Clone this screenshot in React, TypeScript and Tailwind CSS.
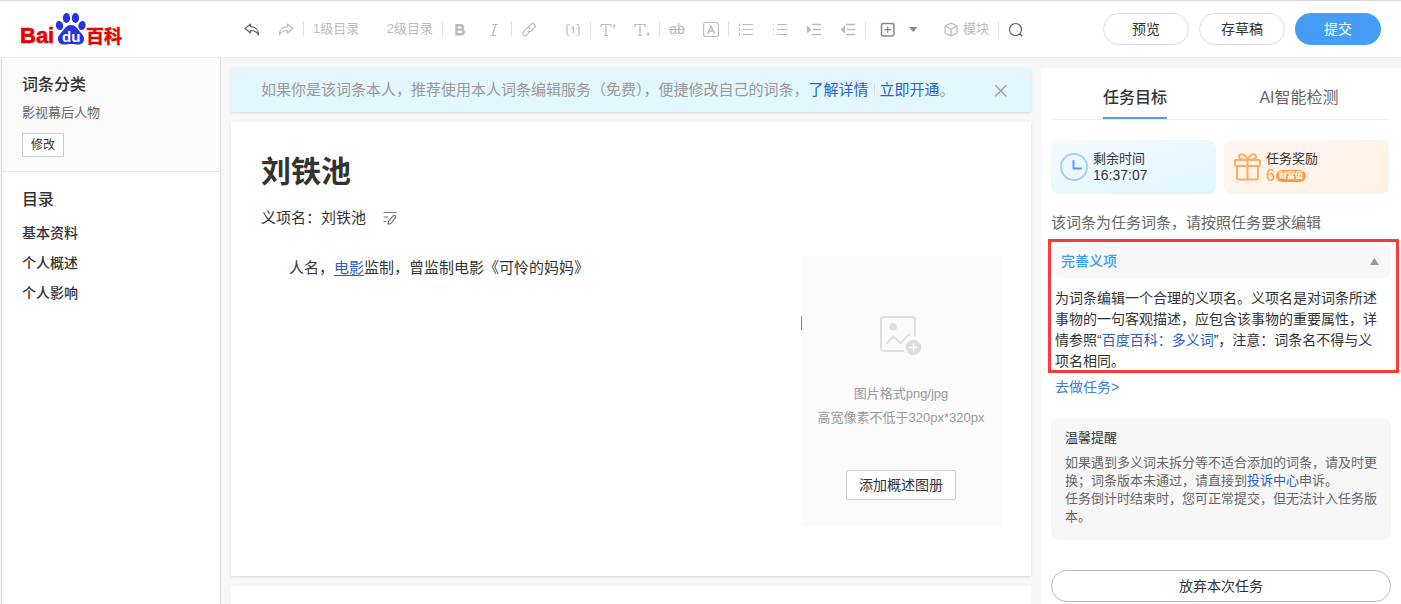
import React from 'react';

const catalog = ['基本资料', '个人概述', '个人影响'];

function Icon({ children, size = 16, className = '' }: { children: React.ReactNode; size?: number; className?: string }) {
  return (
    <svg
      width={size}
      height={size}
      viewBox="0 0 16 16"
      fill="none"
      stroke="currentColor"
      strokeWidth="1.2"
      strokeLinecap="round"
      strokeLinejoin="round"
      className={className}
      aria-hidden="true"
    >
      {children}
    </svg>
  );
}

function Sep() {
  return <span className="h-4 w-px shrink-0 bg-[#e0e0e0]" />;
}

function Tool({ label, active, children }: { label: string; active?: boolean; children: React.ReactNode }) {
  return (
    <button
      aria-label={label}
      className={`flex h-8 w-[34px] shrink-0 items-center justify-center ${active ? 'text-[#666]' : 'text-[#bbb]'}`}
    >
      {children}
    </button>
  );
}

function Logo() {
  return (
    <a href="#" aria-label="百度百科" className="block w-[110px]">
      <svg width="110" height="46" viewBox="0 -6 110 46" aria-hidden="true">
        <g fill="#2932e1">
          <ellipse cx="46.500" cy="6" rx="3.600" ry="5" />
          <ellipse cx="55.500" cy="6" rx="3.600" ry="5" />
          <ellipse cx="39.500" cy="13.500" rx="3.600" ry="4.600" transform="rotate(-15 39.500 13.500)" />
          <ellipse cx="62" cy="13.500" rx="3.600" ry="4.600" transform="rotate(15 62 13.500)" />
          <path d="M51 13c3.500 0 5.500 2 7.500 5s5.500 5 5.500 9-3 5.500-6 5.500c-2.500 0-4.500-.6-7-.6s-4.500.6-7 .6c-3 0-6-1.500-6-5.500s3.500-6 5.500-9 4-5 7.500-5z" />
        </g>
        <text x="0" y="31" fill="#e10602" stroke="#e10602" strokeWidth="0.600" fontSize="22" fontWeight="700" fontFamily="Liberation Sans">
          Bai
        </text>
        <text x="42" y="30" fill="#fff" fontSize="15" fontWeight="700" fontFamily="Liberation Sans">
          du
        </text>
        <text x="66" y="31" fill="#e10602" stroke="#e10602" strokeWidth="0.500" fontSize="18" fontWeight="700" fontFamily="Noto Sans CJK SC">
          百科
        </text>
      </svg>
    </a>
  );
}

function Toolbar() {
  return (
    <div className="flex min-w-0 items-center text-[13px] leading-4 text-[#bbb]">
      <Tool label="撤销" active>
        <Icon>
          <path d="M6.500 3L1 7.500l5.500 4.500V9.500c4 0 6.500 1 8 4.500.3-5-3-8-8-8.300z" />
        </Icon>
      </Tool>
      <Tool label="重做">
        <Icon>
          <path d="M9.500 3L15 7.500l-5.500 4.500V9.500c-4 0-6.500 1-8 4.500-.3-5 3-8 8-8.300z" />
        </Icon>
      </Tool>
      <Sep />
      <div className="flex w-[138px] justify-between px-[9px]">
        <button>1级目录</button>
        <button>2级目录</button>
      </div>
      <Sep />
      <Tool label="粗体">
        <Icon>
          <path strokeWidth="2.400" strokeLinejoin="miter" d="M4.500 4.200h4.200a2.200 2.200 0 010 4.400H4.500zM4.500 8.600h4.900a2.300 2.300 0 010 4.600H4.500z" />
        </Icon>
      </Tool>
      <Tool label="斜体">
        <Icon>
          <path d="M6.500 3.500h5M4.500 14.500h5M9.500 3.500l-3 11" />
        </Icon>
      </Tool>
      <Sep />
      <div className="flex gap-[10px]">
        <Tool label="链接">
          <Icon>
            <path d="M7 6.500l3-3c2.500-2 5.300.8 3.500 3.200l-3 3.200c-1.200 1-2.500.8-3.400 0M9 10l-3 4c-2.500 2-5.300-.8-3.500-3.200l3-3.200c1.200-1 2.500-.8 3.400 0" />
          </Icon>
        </Tool>
        <Tool label="参考资料">
          <Icon>
            <path d="M4 3.500C2 3.500 2 4 2 6v6c0 2 0 2.500 2 2.500M12 3.500c2 0 2 .5 2 2.500v6c0 2 0 2.500-2 2.500M7 7l1.300-1v6" />
          </Icon>
        </Tool>
      </div>
      <Sep />
      <Tool label="上标">
        <Icon>
          <path d="M1 5.500v-2h10v2M6 3.500v11M4.500 14.500h3M13.500 4h1.500l-1.500 2H15" />
        </Icon>
      </Tool>
      <Tool label="下标">
        <Icon>
          <path d="M1 5.500v-2h10v2M6 3.500v11M4.500 14.500h3M13.500 12h1.500l-1.500 2H15" />
        </Icon>
      </Tool>
      <Sep />
      <Tool label="删除线">
        <span className="text-[14px] line-through">ab</span>
      </Tool>
      <Tool label="文字背景">
        <Icon>
          <rect x="0.600" y="1.500" width="14.800" height="14" rx="2" />
          <path strokeWidth="1.500" d="M4.800 12.500L8 5l3.200 7.500M5.800 10h4.400" />
        </Icon>
      </Tool>
      <Sep />
      <Tool label="有序列表">
        <Icon>
          <path d="M5 3.500h9.500M5 8.500h9.500M5 13.500h9.500M1.500 3v1.500M1.500 8v1M1.500 12.500V14" />
        </Icon>
      </Tool>
      <Tool label="无序列表">
        <Icon>
          <path d="M5.500 3.500h9M5.500 8.500h9M5.500 13.500h9M1.500 3.500h.1M1.500 8.500h.1M1.500 13.500h.1" />
        </Icon>
      </Tool>
      <Tool label="增加缩进">
        <Icon>
          <path strokeWidth="1.600" d="M6.500 3.500h8M7.500 8.500h7M6.500 13.500h8" />
          <path fill="currentColor" d="M1.500 5.500v6l3-3z" />
        </Icon>
      </Tool>
      <Tool label="减少缩进">
        <Icon>
          <path strokeWidth="1.600" d="M6.500 3.500h8M7.500 8.500h7M6.500 13.500h8" />
          <path fill="currentColor" d="M4.500 5.500v6l-3-3z" />
        </Icon>
      </Tool>
      <Sep />
      <div className="flex pl-[5px]">
        <Tool label="插入" active>
          <Icon>
            <rect x="1.500" y="2.500" width="12.500" height="12.500" rx="2" stroke="#888" strokeWidth="1.500" />
            <path d="M7.700 6v5.500M5 8.700h5.500" stroke="#5f88b8" />
          </Icon>
        </Tool>
        <button aria-label="更多插入" className="w-4 text-[#888]">
          <Icon>
            <path fill="currentColor" stroke="none" d="M4 6h8.500L8.200 11z" />
          </Icon>
        </button>
      </div>
      <button className="flex shrink-0 items-center gap-1 pr-[9px] pl-[22px] whitespace-nowrap">
        <Icon>
          <path d="M8 2l6 3v7l-6 3-6-3V5zM2 5l6 3.200L14 5M8 8.200V15" />
        </Icon>
        模块
      </button>
      <Sep />
      <Tool label="搜索" active>
        <Icon>
          <circle cx="7.500" cy="8.500" r="6" />
          <path d="M12 13l2 2" />
        </Icon>
      </Tool>
    </div>
  );
}

function Sidebar() {
  return (
    <aside className="ml-px w-[220px] shrink-0 border-x border-[#ddd] bg-white text-[#333]">
      <section className="border-b border-[#e8e8e8] bg-[#fafafa] px-5 pt-[15px] pb-[14px]">
        <h2 className="text-[16px] leading-6 font-medium">词条分类</h2>
        <p className="mt-1 text-[13px] leading-6 text-[#666]">影视幕后人物</p>
        <button className="mt-2 h-6 w-[42px] border border-[#ccc] bg-white text-[12px] leading-4">修改</button>
      </section>
      <nav className="px-5 pt-4">
        <h2 className="text-[16px] leading-6 font-medium">目录</h2>
        <ul className="mt-[6px] text-[14px] leading-[30px] font-medium">
          {catalog.map((item) => (
            <li key={item}>
              <a href="#">{item}</a>
            </li>
          ))}
        </ul>
      </nav>
    </aside>
  );
}

function Banner() {
  return (
    <div className="flex h-11 shrink-0 items-center justify-between bg-[#e3f6fe] pr-[22px] pl-[30px] text-[15px] leading-6 text-[#999] shadow-sm">
      <p className="whitespace-nowrap">
        如果你是该词条本人，推荐使用本人词条编辑服务（免费），便捷修改自己的词条，
        <a href="#" className="text-[#2b60cc]">了解详情</a>
        <span className="mx-[5px] inline-block h-3 w-px bg-[#ddd]" />
        <a href="#" className="text-[#2b60cc]">立即开通</a>。
      </p>
      <button aria-label="关闭" className="text-[#999]">
        <Icon>
          <path d="M2.500 3.500l10.500 10.500M13 3.500L2.500 14" />
        </Icon>
      </button>
    </div>
  );
}

function Article() {
  return (
    <article className="h-[454px] shrink-0 bg-white px-[30px] pt-[30px] text-[#333] shadow-sm">
      <h1 className="text-[30px] leading-10 font-bold">刘铁池</h1>
      <div className="mt-[14px] flex items-center text-[15px] leading-6">
        <span>义项名：</span>
        <span>刘铁池</span>
        <button aria-label="编辑义项名" className="ml-4 text-[#777]">
          <Icon>
            <path d="M2 2.500h12M2 7h3.500M2 11.500h2M11.500 5.500c1.500-.8 3 .7 2 2.200L9 13.500l-3 .7.500-3z" />
          </Icon>
        </button>
      </div>
      <div className="mt-[26px] flex">
        <p className="flex-1 pl-7 text-[15px] leading-6">
          人名，<a href="#" className="text-[#2b60cc] underline underline-offset-2">电影</a>监制，曾监制电影《可怜的妈妈》
        </p>
        <div className="relative flex h-[270px] w-[200px] shrink-0 flex-col items-center bg-[#fbfbfb]">
          <span className="absolute top-[60px] left-0 h-[14px] w-px bg-[#888]" />
          <svg width="42" height="40" viewBox="0 0 42 40" fill="none" className="mt-[60px]" aria-hidden="true">
            <path
              stroke="#dedede"
              strokeWidth="2"
              strokeLinecap="round"
              strokeLinejoin="round"
              d="M35 20V4a3 3 0 00-3-3H4a3 3 0 00-3 3v28a3 3 0 003 3h19M7 27l6.500-6.500 7 6.500L29 18.500"
            />
            <circle cx="13" cy="11" r="3.800" fill="#dedede" />
            <circle cx="33.500" cy="31.500" r="7.800" fill="#dedede" />
            <path stroke="#fff" strokeWidth="1.500" d="M33.500 27.500v8M29.500 31.500h8" />
          </svg>
          <p className="mt-[26px] text-center text-[13px] leading-6 whitespace-nowrap text-[#999]">
            图片格式png/jpg
            <br />
            高宽像素不低于320px*320px
          </p>
          <button className="mt-10 h-[30px] w-[110px] rounded-[2px] border border-[#d0d0d0] bg-white text-[14px]">
            添加概述图册
          </button>
        </div>
      </div>
    </article>
  );
}

function TaskPanel() {
  return (
    <aside className="w-[360px] shrink-0 bg-white text-[#333]">
      <div className="mr-3 ml-3 flex h-[52px] border-b border-[#eee] pr-2 text-[16px] leading-6">
        <div className="flex flex-1 justify-center">
          <button className="border-b-2 border-[#4e9ff5] pt-[10px] font-medium">任务目标</button>
        </div>
        <div className="flex flex-1 justify-center">
          <button className="pt-2 text-[#666]">AI智能检测</button>
        </div>
      </div>
      <div className="mt-5 mr-3 ml-[10px] grid grid-cols-2 gap-2">
        <div className="flex h-[54px] items-center gap-[5px] rounded-lg bg-gradient-to-br from-[#f5fbff] to-[#e0f4ff] pl-[9px]">
          <svg width="28" height="28" viewBox="0 0 28 28" fill="none" aria-hidden="true">
            <circle cx="14" cy="14" r="13" stroke="#a3d0fd" strokeWidth="2" />
            <path d="M13.500 8v7.500H21" stroke="#4e9ff5" strokeWidth="2" strokeLinecap="round" strokeLinejoin="round" />
          </svg>
          <div>
            <p className="text-[13px] leading-[17px]">剩余时间</p>
            <p className="text-[14px] leading-[17px]">16:37:07</p>
          </div>
        </div>
        <div className="flex h-[54px] items-center gap-[5px] rounded-lg bg-gradient-to-br from-[#fff7f0] to-[#fff1e6] pl-[10px]">
          <svg width="27" height="28" viewBox="0 0 27 28" fill="none" stroke="#ffab61" strokeWidth="2" strokeLinejoin="round" strokeLinecap="round" aria-hidden="true">
            <rect x="1" y="7" width="25" height="6" rx="1.500" />
            <path d="M3 13v12a1.500 1.500 0 001.500 1.500h18A1.500 1.500 0 0024 25V13M13.500 7v19M13.500 7C10 7 5 6.500 5 3.500 5.500 0 11 .5 13.500 7zM13.500 7C17 7 22 6.500 22 3.500 21.500 0 16 .5 13.500 7z" />
          </svg>
          <div>
            <p className="text-[13px] leading-[17px]">任务奖励</p>
            <p className="flex items-center gap-px text-[16px] leading-[17px] text-[#ff9b45]">
              6
              <span className="flex h-3 w-[30px] items-center justify-center rounded-full bg-[#ff9b45] text-[8px] leading-3 font-bold whitespace-nowrap text-white">
                财富值
              </span>
            </p>
          </div>
        </div>
      </div>
      <p className="mt-[17px] ml-[10px] text-[15px] leading-6 text-[#666]">该词条为任务词条，请按照任务要求编辑</p>
      <section className="relative mt-1 mr-[2px] ml-[7px] px-[3px] pt-[5px] pb-px">
        <button className="flex h-[34px] w-[340px] items-center justify-between rounded-lg bg-[#f8f8f8] pr-3 pl-[10px] text-[#35a0fb]">
          <span className="text-[14px] leading-6 font-medium">完善义项</span>
          <svg width="9" height="7" viewBox="0 0 9 7" fill="#999" aria-hidden="true">
            <path d="M4.500 0L9 7H0z" />
          </svg>
        </button>
        <p className="mt-[10px] ml-1 text-[14px] leading-[21px]">
          为词条编辑一个合理的义项名。义项名是对词条所述
          <br />
          事物的一句客观描述，应包含该事物的重要属性，详
          <br />
          情参照“<a href="#" className="text-[#2b60cc]">百度百科：多义词</a>”，注意：词条名不得与义
          <br />
          项名相同。
        </p>
        <div className="pointer-events-none absolute inset-0 border-[3px] border-[#fc3a3a]" />
      </section>
      <a href="#" className="mt-[2px] ml-[14px] block text-[14px] leading-6 text-[#3a7fdd]">
        去做任务&gt;
      </a>
      <section className="mx-[10px] mt-[19px] h-[122px] rounded-lg bg-[#f7f7f7] pt-[11px] pr-3 pl-[14px] text-[13px] leading-[18px]">
        <h3>温馨提醒</h3>
        <p className="mt-[7px] text-[#666]">
          如果遇到多义词未拆分等不适合添加的词条，请及时更
          <br />
          换；词条版本未通过，请直接到<a href="#" className="text-[#2b60cc]">投诉中心</a>申诉。
          <br />
          任务倒计时结束时，您可正常提交，但无法计入任务版本。
        </p>
      </section>
      <div className="mx-[10px] mt-[30px]">
        <button className="h-8 w-full rounded-full border border-[#bbb] bg-white text-[14px]">放弃本次任务</button>
      </div>
    </aside>
  );
}

export default function App() {
  return (
    <div
      lang="zh-CN"
      className="flex h-screen flex-col overflow-hidden bg-[#f7f7f7] font-['Liberation_Sans','Noto_Sans_CJK_SC',sans-serif]"
    >
      <header className="z-10 flex h-[58px] shrink-0 items-center border-t border-b border-t-[#d8d8d8] border-b-[#eee] bg-white pr-5 pl-5 text-[14px]">
        <div className="w-[215px] shrink-0">
          <Logo />
        </div>
        <Toolbar />
        <div className="ml-auto flex shrink-0 gap-[10px] text-[#333]">
          <button className="h-8 w-[86px] rounded-full border border-[#ddd]">预览</button>
          <button className="h-8 w-[86px] rounded-full border border-[#ddd]">存草稿</button>
          <button className="h-8 w-[86px] rounded-full bg-[#459df5] text-white">提交</button>
        </div>
      </header>
      <div className="flex min-h-0 flex-1">
        <Sidebar />
        <main className="flex min-w-0 flex-1 flex-col gap-[10px] px-[10px] pt-[10px]">
          <Banner />
          <Article />
          <section className="h-40 shrink-0 bg-white" />
        </main>
        <div className="flex pt-[10px]">
          <TaskPanel />
        </div>
      </div>
    </div>
  );
}
